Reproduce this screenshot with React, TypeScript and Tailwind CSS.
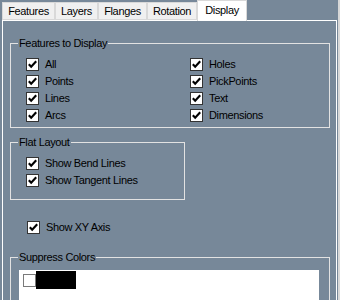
import React from "react";

function Box({ checked = true, light = false }: { checked?: boolean; light?: boolean }) {
  return (
    <span
      className={
        "w-[13px] h-[13px] border bg-white flex items-center justify-center shrink-0 " +
        (light ? "border-[#7a7a7a]" : "border-[#333333]")
      }
    >
      {checked && (
        <svg width="11" height="11" viewBox="0 0 11 11">
          <path d="M1.8 5.2 L4.2 7.8 L9.2 2.2" stroke="#000" strokeWidth="2.1" fill="none" />
        </svg>
      )}
    </span>
  );
}

function Row({ label }: { label: string }) {
  return (
    <div className="flex items-center h-[17px] gap-[6px]">
      <Box />
      <span className="leading-[13px]">{label}</span>
    </div>
  );
}

function Group({
  title,
  className,
  children,
}: {
  title: string;
  className: string;
  children: React.ReactNode;
}) {
  return (
    <div className={"relative border border-[#e2e2e2] " + className}>
      <span className="absolute left-[7px] top-[-8px] px-[1px] bg-[#778899] leading-[14px]">{title}</span>
      {children}
    </div>
  );
}

const tabBase =
  "flex items-center justify-center border border-[#d9d9d9] bg-[#f0f0f0] mt-[2px] h-[18px] leading-[13px]";

export default function App() {
  return (
    <div className="w-[340px] h-[300px] overflow-hidden bg-[#778899] border-r-2 border-[#d8d8d8] font-['Liberation_Sans',Arial,sans-serif] text-[11px] tracking-[-0.35px] text-black">
      <div className="flex items-start h-[20px] pl-[2px]">
        <div className={tabBase + " w-[53px]"}>Features</div>
        <div className={tabBase + " w-[43px]"}>Layers</div>
        <div className={tabBase + " w-[49px]"}>Flanges</div>
        <div className={tabBase + " w-[50px]"}>Rotation</div>
        <div className="relative z-10 w-[50px] h-[21px] flex items-center justify-center pb-[1px] bg-white border-l border-t border-r border-[#d9d9d9] leading-[13px]">
          Display
        </div>
      </div>
      <div className="ml-[2px] w-[335px] h-[290px] border-l border-t border-r border-white">
        <Group title="Features to Display" className="ml-[7px] mt-[22px] w-[320px] pt-[12px] pb-[3px]">
          <div className="grid grid-cols-[164px_1fr] pl-[15px]">
            <div>
              <Row label="All" />
              <Row label="Points" />
              <Row label="Lines" />
              <Row label="Arcs" />
            </div>
            <div>
              <Row label="Holes" />
              <Row label="PickPoints" />
              <Row label="Text" />
              <Row label="Dimensions" />
            </div>
          </div>
        </Group>
        <Group title="Flat Layout" className="ml-[7px] mt-[14px] w-[175px] pt-[12px] pb-[10px] pl-[15px]">
          <Row label="Show Bend Lines" />
          <Row label="Show Tangent Lines" />
        </Group>
        <div className="ml-[24px] mt-[19px]">
          <Row label="Show XY Axis" />
        </div>
        <Group title="Suppress Colors" className="ml-[7px] mt-[21px] w-[320px] pt-[12px] h-[80px]">
          <div className="ml-[8px] w-[300px] h-[60px] bg-white pl-[4px] pt-[1px]">
            <div className="flex items-center gap-0">
              <Box checked={false} light />
              <span className="ml-[0px] w-[40px] h-[18px] bg-black" />
            </div>
          </div>
        </Group>
      </div>
    </div>
  );
}
